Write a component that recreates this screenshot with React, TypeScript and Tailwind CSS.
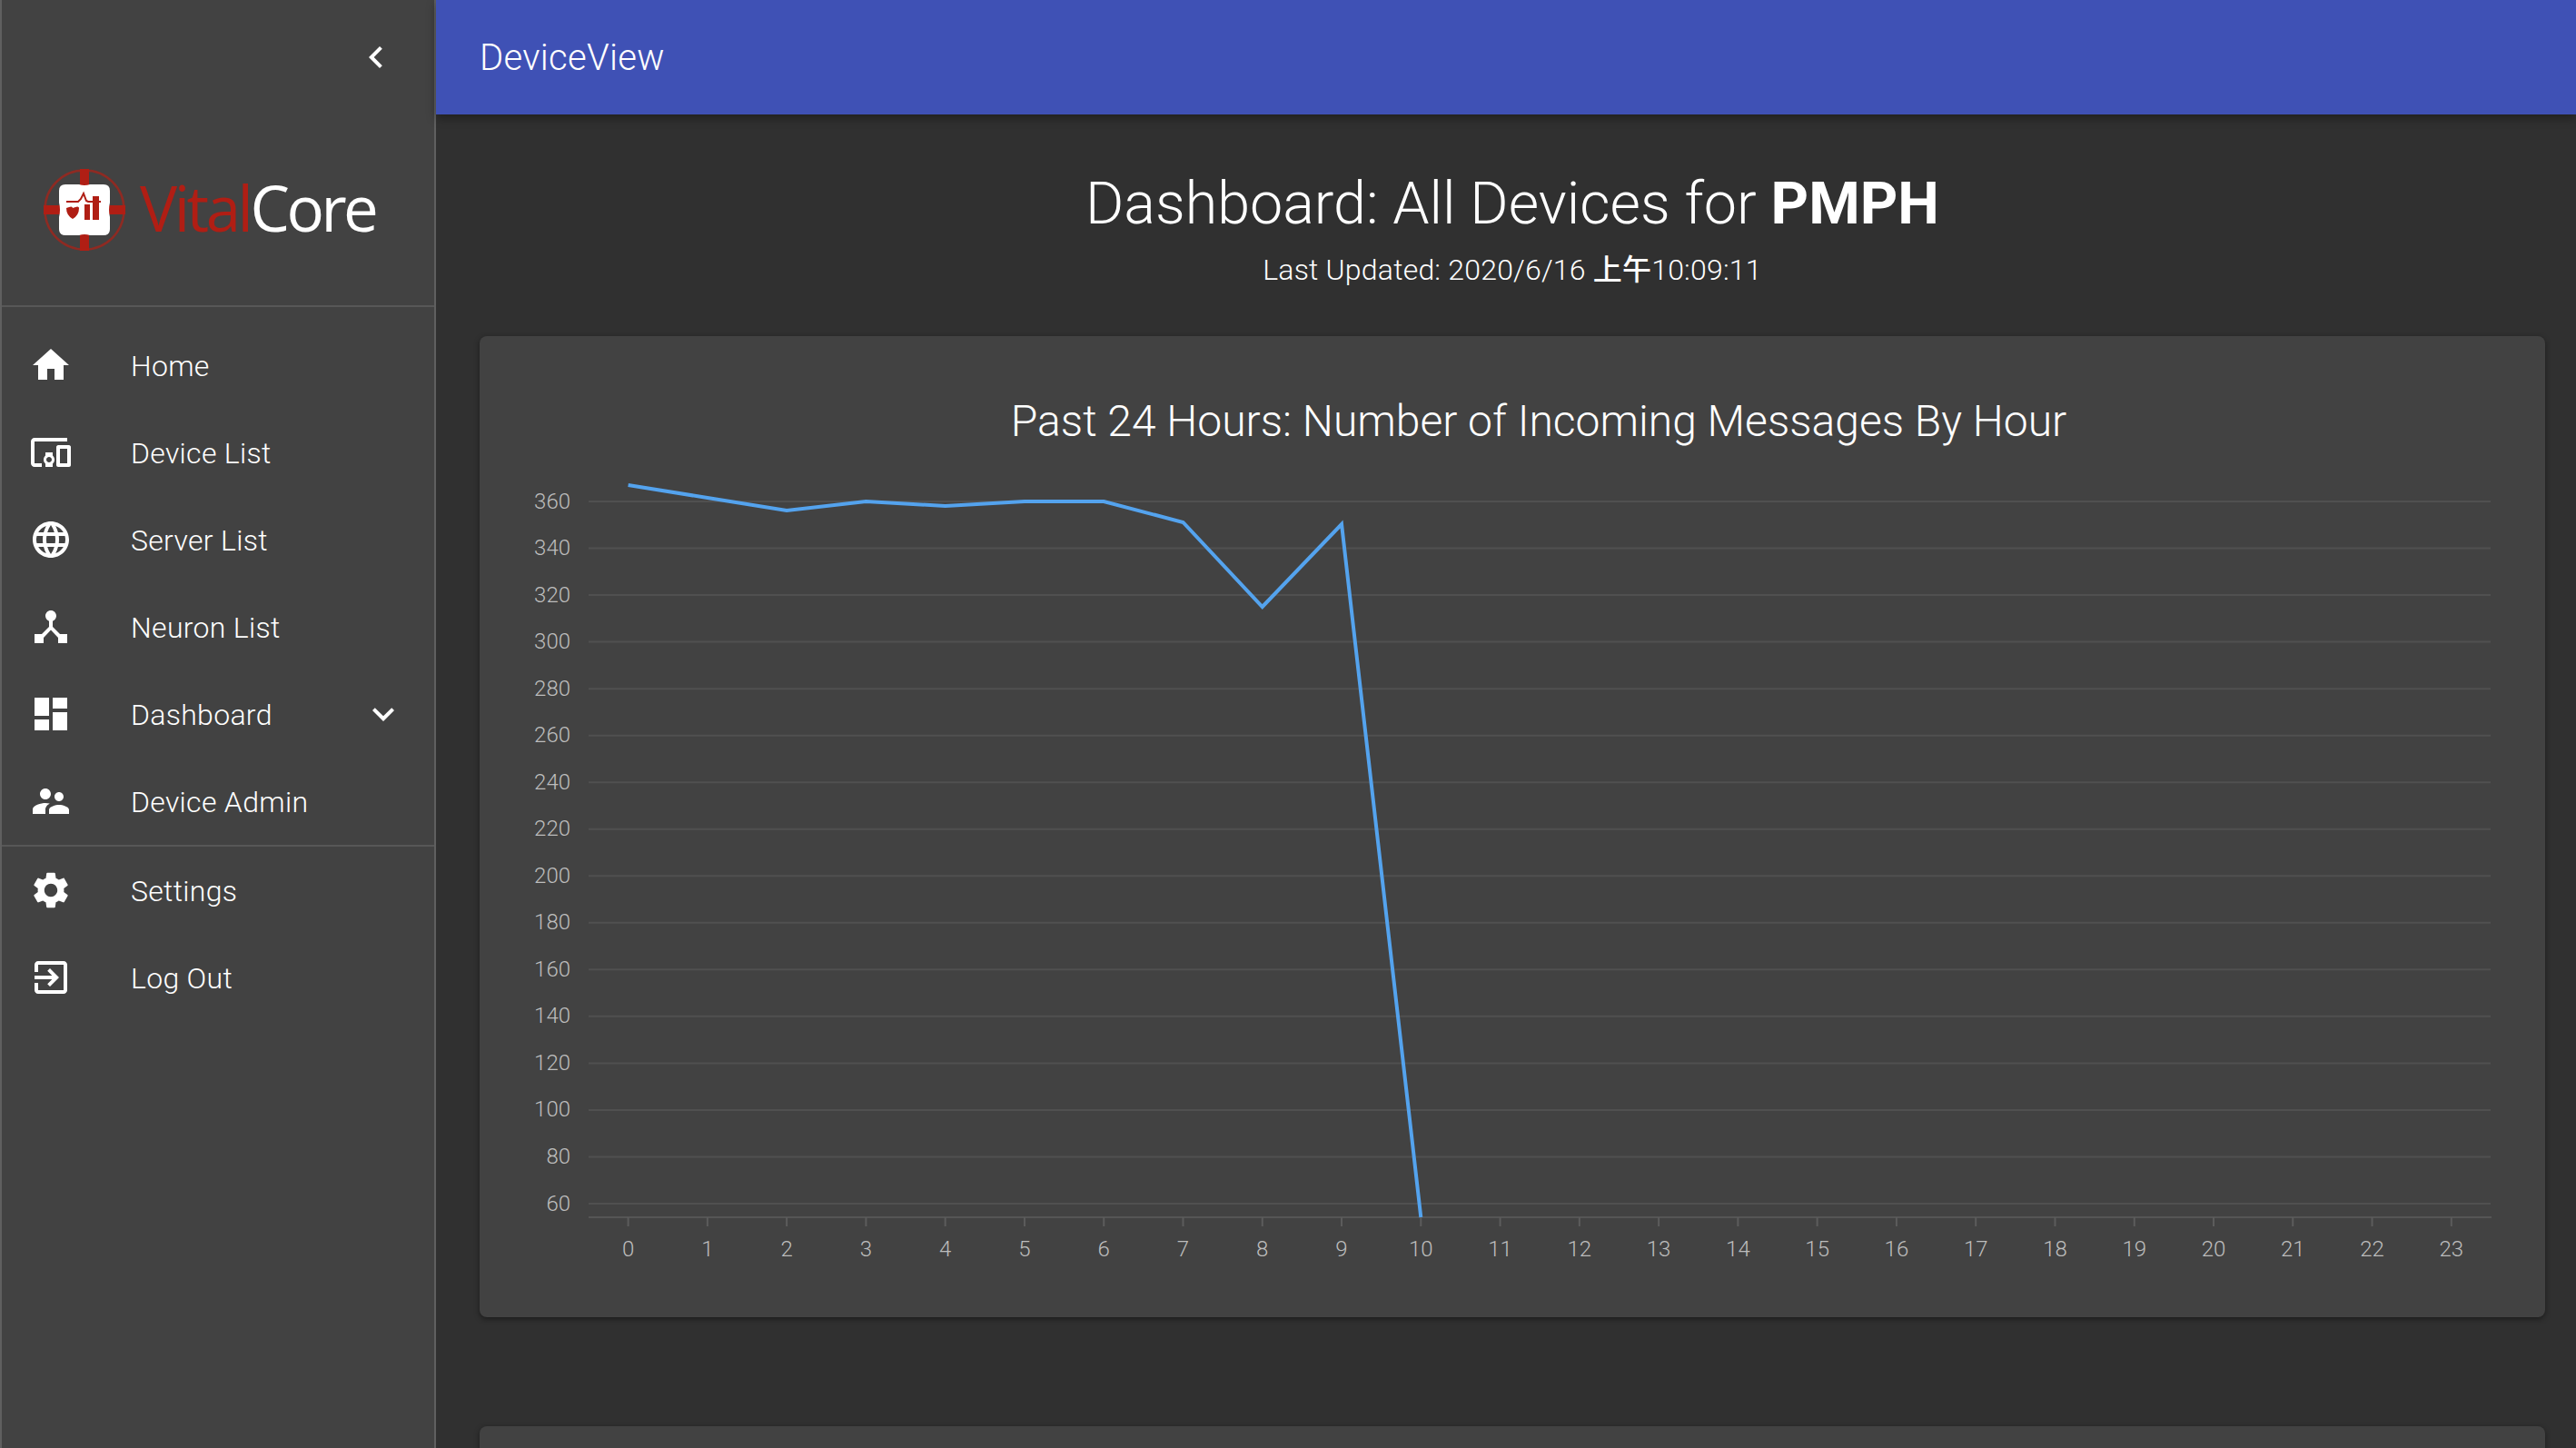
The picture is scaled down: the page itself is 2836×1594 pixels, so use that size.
import React from "react";

const navTop = [
  {
    label: "Home",
    d: "M10 20v-6h4v6h5v-8h3L12 3 2 12h3v8z",
  },
  {
    label: "Device List",
    d: "M3 6h18V4H3c-1.1 0-2 .9-2 2v12c0 1.1.9 2 2 2h4v-2H3V6zm10 6H9v1.78c-.61.55-1 1.33-1 2.22s.39 1.67 1 2.22V20h4v-1.78c.61-.55 1-1.34 1-2.22s-.39-1.67-1-2.22V12zm-2 5.5c-.83 0-1.5-.67-1.5-1.5s.67-1.5 1.5-1.5 1.5.67 1.5 1.5-.67 1.5-1.5 1.5zM22 8h-6c-.5 0-1 .5-1 1v10c0 .5.5 1 1 1h6c.5 0 1-.5 1-1V9c0-.5-.5-1-1-1zm-1 10h-4v-8h4v8z",
  },
  {
    label: "Server List",
    d: "M11.99 2C6.47 2 2 6.48 2 12s4.47 10 9.99 10C17.52 22 22 17.52 22 12S17.52 2 11.99 2zm6.93 6h-2.95c-.32-1.25-.78-2.45-1.38-3.56 1.84.63 3.37 1.91 4.33 3.56zM12 4.04c.83 1.2 1.48 2.53 1.91 3.96h-3.82c.43-1.43 1.08-2.76 1.91-3.96zM4.26 14C4.1 13.36 4 12.69 4 12s.1-1.36.26-2h3.38c-.08.66-.14 1.32-.14 2 0 .68.06 1.34.14 2H4.26zm.82 2h2.95c.32 1.25.78 2.45 1.38 3.56-1.84-.63-3.37-1.9-4.33-3.56zm2.95-8H5.08c.96-1.66 2.49-2.93 4.33-3.56C8.81 5.55 8.35 6.75 8.03 8zM12 19.96c-.83-1.2-1.48-2.53-1.91-3.96h3.82c-.43 1.43-1.08 2.76-1.91 3.96zM14.34 14H9.66c-.09-.66-.16-1.32-.16-2 0-.68.07-1.35.16-2h4.68c.09.65.16 1.32.16 2 0 .68-.07 1.34-.16 2zm.25 5.56c.6-1.11 1.06-2.31 1.38-3.56h2.95c-.96 1.65-2.49 2.93-4.33 3.56zM16.36 14c.08-.66.14-1.32.14-2 0-.68-.06-1.34-.14-2h3.38c.16.64.26 1.31.26 2s-.1 1.36-.26 2h-3.38z",
  },
  {
    label: "Neuron List",
    d: "M17 16l-4-4V8.82C14.16 8.4 15 7.3 15 6c0-1.66-1.34-3-3-3S9 4.34 9 6c0 1.3.84 2.4 2 2.82V12l-4 4H3v5h5v-3.05l4-4.2 4 4.2V21h5v-5h-4z",
  },
  {
    label: "Dashboard",
    d: "M3 13h8V3H3v10zm0 8h8v-6H3v6zm10 0h8V11h-8v10zm0-18v6h8V3h-8z",
    expand: true,
  },
  {
    label: "Device Admin",
    d: "M16.5 12c1.38 0 2.49-1.12 2.49-2.5S17.88 7 16.5 7C15.12 7 14 8.12 14 9.5s1.12 2.5 2.5 2.5zM9 11c1.66 0 2.99-1.34 2.99-3S10.66 5 9 5C7.34 5 6 6.34 6 8s1.34 3 3 3zm7.5 3c-1.83 0-5.5.92-5.5 2.75V19h11v-2.25c0-1.83-3.67-2.75-5.5-2.75zM9 13c-2.33 0-7 1.17-7 3.5V19h7v-2.25c0-.85.33-2.34 2.37-3.47C10.5 13.1 9.66 13 9 13z",
  },
];

const navBottom = [
  {
    label: "Settings",
    d: "M19.14 12.94c.04-.3.06-.61.06-.94 0-.32-.02-.64-.07-.94l2.03-1.58c.18-.14.23-.41.12-.61l-1.92-3.32c-.12-.22-.37-.29-.59-.22l-2.39.96c-.5-.38-1.03-.7-1.62-.94l-.36-2.54c-.04-.24-.24-.41-.48-.41h-3.84c-.24 0-.43.17-.47.41l-.36 2.54c-.59.24-1.13.57-1.62.94l-2.39-.96c-.22-.08-.47 0-.59.22L2.74 8.87c-.12.21-.08.47.12.61l2.03 1.58c-.05.3-.09.63-.09.94s.02.64.07.94l-2.03 1.58c-.18.14-.23.41-.12.61l1.92 3.32c.12.22.37.29.59.22l2.39-.96c.5.38 1.03.7 1.62.94l.36 2.54c.05.24.24.41.48.41h3.84c.24 0 .44-.17.47-.41l.36-2.54c.59-.24 1.13-.56 1.62-.94l2.39.96c.22.08.47 0 .59-.22l1.92-3.32c.12-.22.07-.47-.12-.61l-2.01-1.58zM12 15.6c-1.98 0-3.6-1.62-3.6-3.6s1.62-3.6 3.6-3.6 3.6 1.62 3.6 3.6-1.62 3.6-3.6 3.6z",
  },
  {
    label: "Log Out",
    d: "M10.09 15.59L11.5 17l5-5-5-5-1.41 1.41L12.67 11H3v2h9.67l-2.58 2.59zM19 3H5c-1.11 0-2 .9-2 2v4h2V5h14v14H5v-4H3v4c0 1.1.89 2 2 2h14c1.1 0 2-.9 2-2V5c0-1.1-.9-2-2-2z",
  },
];

const Icon = ({ d }: { d: string }) => (
  <svg className="h-12 w-12 shrink-0 fill-white" viewBox="0 0 24 24" aria-hidden="true">
    <path d={d} />
  </svg>
);

const NavRow = ({ label, d, expand }: { label: string; d: string; expand?: boolean }) => (
  <div className="flex h-24 items-center pl-[30px] pr-[32px]">
    <div className="w-[112px] shrink-0">
      <Icon d={d} />
    </div>
    <span className="flex-1 pt-[2px] text-[32px] font-light leading-[48px] tracking-[0.3px] text-white">{label}</span>
    {expand && <Icon d="M16.59 8.59L12 13.17 7.41 8.59 6 10l6 6 6-6z" />}
  </div>
);

const LogoMark = () => (
  <svg className="h-[92px] w-[92px] shrink-0" viewBox="0 0 92 92" aria-hidden="true">
    <circle cx="46" cy="46" r="43.5" fill="none" stroke="#8f2a22" strokeWidth="2.5" />
    <rect x="41" y="1" width="10" height="18" fill="#b01e14" />
    <rect x="41" y="73" width="10" height="18" fill="#b01e14" />
    <rect x="1" y="41" width="18" height="10" fill="#b01e14" />
    <rect x="73" y="41" width="18" height="10" fill="#b01e14" />
    <path
      d="M25 18h15q6 2 12 0h15q7 0 7 7v13q-2 8 0 16v13q0 7-7 7H52q-6-2-12 0H25q-7 0-7-7V54q2-8 0-16V25q0-7 7-7z"
      fill="#fff"
    />
    <path d="M26 37h13l3-3 3-6 3 8 2 1h14" fill="none" stroke="#b01e14" strokeWidth="2" />
    <path d="M26 44q7-3 7 0q7-3 7 0q0 8-7 12q-7-4-7-12z" fill="#b01e14" />
    <rect x="46" y="40" width="6" height="17" fill="#b01e14" />
    <rect x="55" y="31" width="7" height="26" fill="#b01e14" />
  </svg>
);

const yTicks = [360, 340, 320, 300, 280, 260, 240, 220, 200, 180, 160, 140, 120, 100, 80, 60];
const hours = Array.from({ length: 24 }, (_, i) => i);
const hourX = (h: number) => 691.6 + h * 87.27;
const valueY = (v: number) => 552 + ((360 - v) * 773) / 300;
// y positions read straight off the plot, the values were never labelled
const linePoints: [number, number][] = [
  [0, 534],
  [1, 548],
  [2, 562],
  [3, 552],
  [4, 557],
  [5, 552],
  [6, 552],
  [7, 575],
  [8, 668],
  [9, 577],
  [10, 1340],
];

const Chart = () => (
  <svg className="block h-[930px] w-[2274px]" viewBox="528 520 2274 930">
    {yTicks.map((v) => (
      <g key={v}>
        <line x1="648" x2="2742" y1={valueY(v)} y2={valueY(v)} stroke="#505050" strokeWidth="2" />
        <text
          x="628"
          y={valueY(v) + 7.5}
          textAnchor="end"
          fontSize="24"
          fontWeight="300"
          fill="#bdbdbd"
          fontFamily="Roboto, sans-serif"
        >
          {v}
        </text>
      </g>
    ))}
    <line x1="648" x2="2743" y1="1340" y2="1340" stroke="#555555" strokeWidth="2" />
    {hours.map((h) => (
      <g key={h}>
        <line x1={hourX(h)} x2={hourX(h)} y1="1340" y2="1350" stroke="#5c5c5c" strokeWidth="2" />
        <text
          x={hourX(h)}
          y="1383"
          textAnchor="middle"
          fontSize="24"
          fontWeight="300"
          fill="#bdbdbd"
          fontFamily="Roboto, sans-serif"
        >
          {h}
        </text>
      </g>
    ))}
    <polyline
      points={linePoints.map(([h, y]) => `${hourX(h)},${y}`).join(" ")}
      fill="none"
      stroke="#54a3ee"
      strokeWidth="4"
    />
  </svg>
);

export default function App() {
  return (
    <div className="flex h-[1594px] w-[2836px] overflow-hidden bg-[#303030] font-['Roboto','Noto_Sans_CJK_TC',sans-serif] text-white">
      <aside className="h-full w-[480px] shrink-0 border-x-2 border-[#5f5f5f] bg-[#424242]">
        <div className="flex h-[126px] items-center justify-end pr-[40px]">
          <Icon d="M15.41 7.41L14 6l-6 6 6 6 1.41-1.41L10.83 12z" />
        </div>
        <div className="flex h-[212px] items-center border-b-2 border-[#575757] pl-[45px]">
          <LogoMark />
          <span className="mb-[6px] ml-[15px] font-['Open_Sans',sans-serif] text-[69px] leading-none tracking-[-3.5px] text-[#b01e14]">
            Vital<span className="text-white">Core</span>
          </span>
        </div>
        <nav className="pt-[16px]">
          {navTop.map((item) => (
            <NavRow key={item.label} {...item} />
          ))}
        </nav>
        <div className="border-t-2 border-[#575757]">
          {navBottom.map((item) => (
            <NavRow key={item.label} {...item} />
          ))}
        </div>
      </aside>

      <div className="flex h-full min-w-0 flex-1 flex-col">
        <header className="relative z-10 flex h-[126px] shrink-0 items-center bg-[#3f51b5] pl-[48px] pt-[2px] shadow-[0_4px_10px_rgba(0,0,0,0.35)]">
          <h1 className="text-[40px] font-light leading-none tracking-[0.3px]">DeviceView</h1>
        </header>
        <main className="min-h-0 flex-1 overflow-hidden pl-[48px] pr-[34px]">
          <div className="h-[244px] pt-[50px] text-center">
            <h2 className="text-[64.6px] font-light leading-[96px]">
              Dashboard: All Devices for <b className="font-bold">PMPH</b>
            </h2>
            <p className="pt-[1px] text-[32px] font-light leading-[48px] tracking-[0.2px]">
              Last Updated: 2020/6/16 <span className="font-medium">上午</span>10:09:11
            </p>
          </div>
          <section className="h-[1080px] rounded-lg bg-[#424242] shadow-[0_2px_6px_rgba(0,0,0,0.45)]">
            <h3 className="h-[150px] pl-[58px] pt-[64px] text-center text-[48px] font-light leading-[60px]">
              Past 24 Hours: Number of Incoming Messages By Hour
            </h3>
            <Chart />
          </section>
          <section className="mt-[120px] h-[300px] rounded-lg bg-[#424242] shadow-[0_2px_6px_rgba(0,0,0,0.45)]" />
        </main>
      </div>
    </div>
  );
}
